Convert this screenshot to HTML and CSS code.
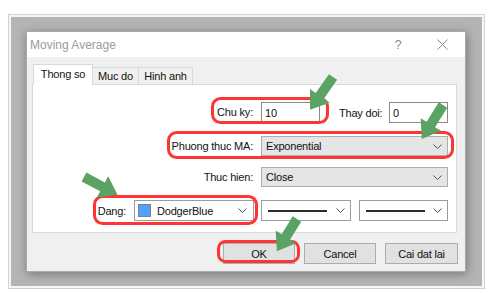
FILE: index.html
```html
<!DOCTYPE html>
<html>
<head>
<meta charset="utf-8">
<link rel="stylesheet" href="styles.css">
</head>
<body>
<div class="frame">
  <div class="desk">
    <div class="dialog">
      <div class="titlebar">
        <span class="title">Moving Average</span>
        <span class="help">?</span>
        <span class="close"><svg width="11" height="11" viewBox="0 0 11 11"><path d="M0.5 0.5 L10.5 10.5 M10.5 0.5 L0.5 10.5" stroke="#8a8a8a" stroke-width="1" fill="none"/></svg></span>
      </div>
      <div class="body">
        <div class="tabs">
          <div class="tab active">Thong so</div>
          <div class="tab t2">Muc do</div>
          <div class="tab t3">Hinh anh</div>
        </div>
        <div class="panel">
          <div class="lbl">Chu ky:</div>
          <div class="pair">
            <div class="box input">10</div>
            <span class="lbl2">Thay doi:</span>
            <div class="box input last">0</div>
          </div>

          <div class="lbl">Phuong thuc MA:</div>
          <div class="box combo gray">Exponential<svg class="chev" width="9" height="5" viewBox="0 0 9 5"><polyline points="0.5,0.5 4.5,4.5 8.5,0.5" fill="none" stroke="#555" stroke-width="1"/></svg></div>

          <div class="lbl">Thuc hien:</div>
          <div class="box combo gray">Close<svg class="chev" width="9" height="5" viewBox="0 0 9 5"><polyline points="0.5,0.5 4.5,4.5 8.5,0.5" fill="none" stroke="#555" stroke-width="1"/></svg></div>

          <div class="dang-cell">
            <span>Dang:</span>
            <div class="box combo colorbox"><span class="swatch"></span>DodgerBlue<svg class="chev" width="9" height="5" viewBox="0 0 9 5"><polyline points="0.5,0.5 4.5,4.5 8.5,0.5" fill="none" stroke="#555" stroke-width="1"/></svg></div>
          </div>
          <div class="lines">
            <div class="box combo linebox"><span class="line"></span><svg class="chev" width="9" height="5" viewBox="0 0 9 5"><polyline points="0.5,0.5 4.5,4.5 8.5,0.5" fill="none" stroke="#555" stroke-width="1"/></svg></div>
            <div class="box combo linebox b2"><span class="line"></span><svg class="chev" width="9" height="5" viewBox="0 0 9 5"><polyline points="0.5,0.5 4.5,4.5 8.5,0.5" fill="none" stroke="#555" stroke-width="1"/></svg></div>
          </div>
        </div>
        <div class="buttons">
          <div class="btn">OK</div>
          <div class="btn">Cancel</div>
          <div class="btn wide">Cai dat lai</div>
        </div>
      </div>
    </div>
  </div>
</div>

<svg class="overlay" width="490" height="293" viewBox="0 0 490 293">
  <g fill="none" stroke="#fe3535" stroke-width="3">
    <rect x="212.5" y="98.5" width="115" height="24" rx="8"/>
    <rect x="168.5" y="132.5" width="284" height="25" rx="8"/>
    <rect x="94.5" y="196.5" width="162" height="27" rx="8"/>
    <rect x="218.5" y="241.5" width="80" height="20" rx="7"/>
  </g>
  <g fill="#5aa364">
    <polygon transform="translate(333,77) rotate(35)" points="-5,0 5,0 5,23 12,23 0,40 -12,23 -5,23"/>
    <polygon transform="translate(443,105) rotate(32)" points="-5,0 5,0 5,23 12,23 0,40 -12,23 -5,23"/>
    <polygon transform="translate(84,177) rotate(-62)" points="-5,0 5,0 5,21 12,21 0,38 -12,21 -5,21"/>
    <polygon transform="translate(297,219) rotate(32)" points="-5,0 5,0 5,21 12,21 0,38 -12,21 -5,21"/>
  </g>
</svg>
</body>
</html>
```

FILE: styles.css
```css
* { box-sizing: border-box; }

body {
  margin: 0;
  font-family: "Liberation Sans", Arial, sans-serif;
  font-size: 11px;
  letter-spacing: -0.2px;
  color: #111;
  background: #fff;
}

.frame {
  margin: 14px 0 0 8px;
  width: 477px;
  height: 275px;
  border: 1px solid #d2d2d2;
  padding: 2px;
  background: #f6f6f6;
}

.desk {
  height: 100%;
  background: #b4b4b4;
  padding: 14px 0 0 15px;
}

.dialog {
  width: 440px;
  height: 241px;
  background: #f0f0f0;
  border: 1px solid #a9a9a9;
  box-shadow: 1px 2px 9px rgba(0, 0, 0, 0.35);
}

.titlebar {
  height: 25px;
  background: #fff;
  display: flex;
  align-items: center;
}

.title {
  flex: 1;
  padding-left: 3px;
  font-size: 12px;
  letter-spacing: 0;
  color: #9b9b9b;
}

.help {
  width: 44px;
  text-align: center;
  font-size: 13px;
  color: #8e8e8e;
}

.close {
  width: 45px;
  display: flex;
  justify-content: center;
}

.body {
  padding: 7px 7px 0 5px;
}

.tabs {
  display: flex;
  align-items: flex-end;
  height: 21px;
  margin-bottom: -1px;
  padding-left: 1px;
  position: relative;
  z-index: 1;
}

.tab {
  height: 18px;
  line-height: 16px;
  text-align: center;
  border: 1px solid #d9d9d9;
  background: #f0f0f0;
  margin-left: -1px;
}

.tab.active {
  width: 60px;
  height: 21px;
  line-height: 19px;
  background: #fff;
  border-bottom: none;
  margin-left: 0;
  position: relative;
  z-index: 2;
}

.tab.t2 { width: 47px; }
.tab.t3 { width: 55px; }

.panel {
  width: 425px;
  background: #fff;
  border: 1px solid #d9d9d9;
  display: grid;
  grid-template-columns: 1fr 187px;
  grid-template-rows: 34px 31px 33px 21px;
  align-items: start;
  column-gap: 7px;
  padding: 17px 8px 11px 0;
}

.lbl {
  justify-self: end;
  height: 21px;
  line-height: 21px;
  padding-right: 1px;
}

.box {
  height: 21px;
  border: 1px solid #9c9c9c;
  background: #fff;
  display: flex;
  align-items: center;
}

.input {
  width: 59px;
  padding-left: 3px;
  border-color: #8a8a8a;
}

.pair {
  display: flex;
  align-items: center;
  height: 21px;
}

.lbl2 {
  margin-left: 19px;
}

.input.last {
  margin-left: auto;
}

.combo {
  padding: 0 5px 0 4px;
}

.chev {
  margin-left: auto;
  flex: none;
}

.combo.gray {
  background: #e5e5e5;
  border-color: #adadad;
  height: 20px;
}

.dang-cell {
  justify-self: end;
  display: flex;
  align-items: center;
  gap: 8px;
}

.colorbox {
  width: 120px;
  padding-left: 3px;
  padding-right: 6px;
}

.swatch {
  width: 13px;
  height: 13px;
  background: #4ea3ff;
  border: 1px solid #808080;
  margin-right: 6px;
  flex: none;
}

.lines {
  display: flex;
  gap: 8px;
}

.linebox {
  width: 90px;
  padding-left: 6px;
}

.linebox.b2 {
  width: 89px;
}

.line {
  width: 59px;
  height: 2px;
  background: #2b2b2b;
}

.buttons {
  display: flex;
  justify-content: flex-end;
  gap: 9px;
  margin-top: 10px;
}

.btn {
  width: 72px;
  height: 21px;
  background: #e1e1e1;
  border: 1px solid #adadad;
  display: flex;
  align-items: center;
  justify-content: center;
}

.btn.wide {
  width: 73px;
}

.overlay {
  position: absolute;
  left: 0;
  top: 0;
  pointer-events: none;
}
```
